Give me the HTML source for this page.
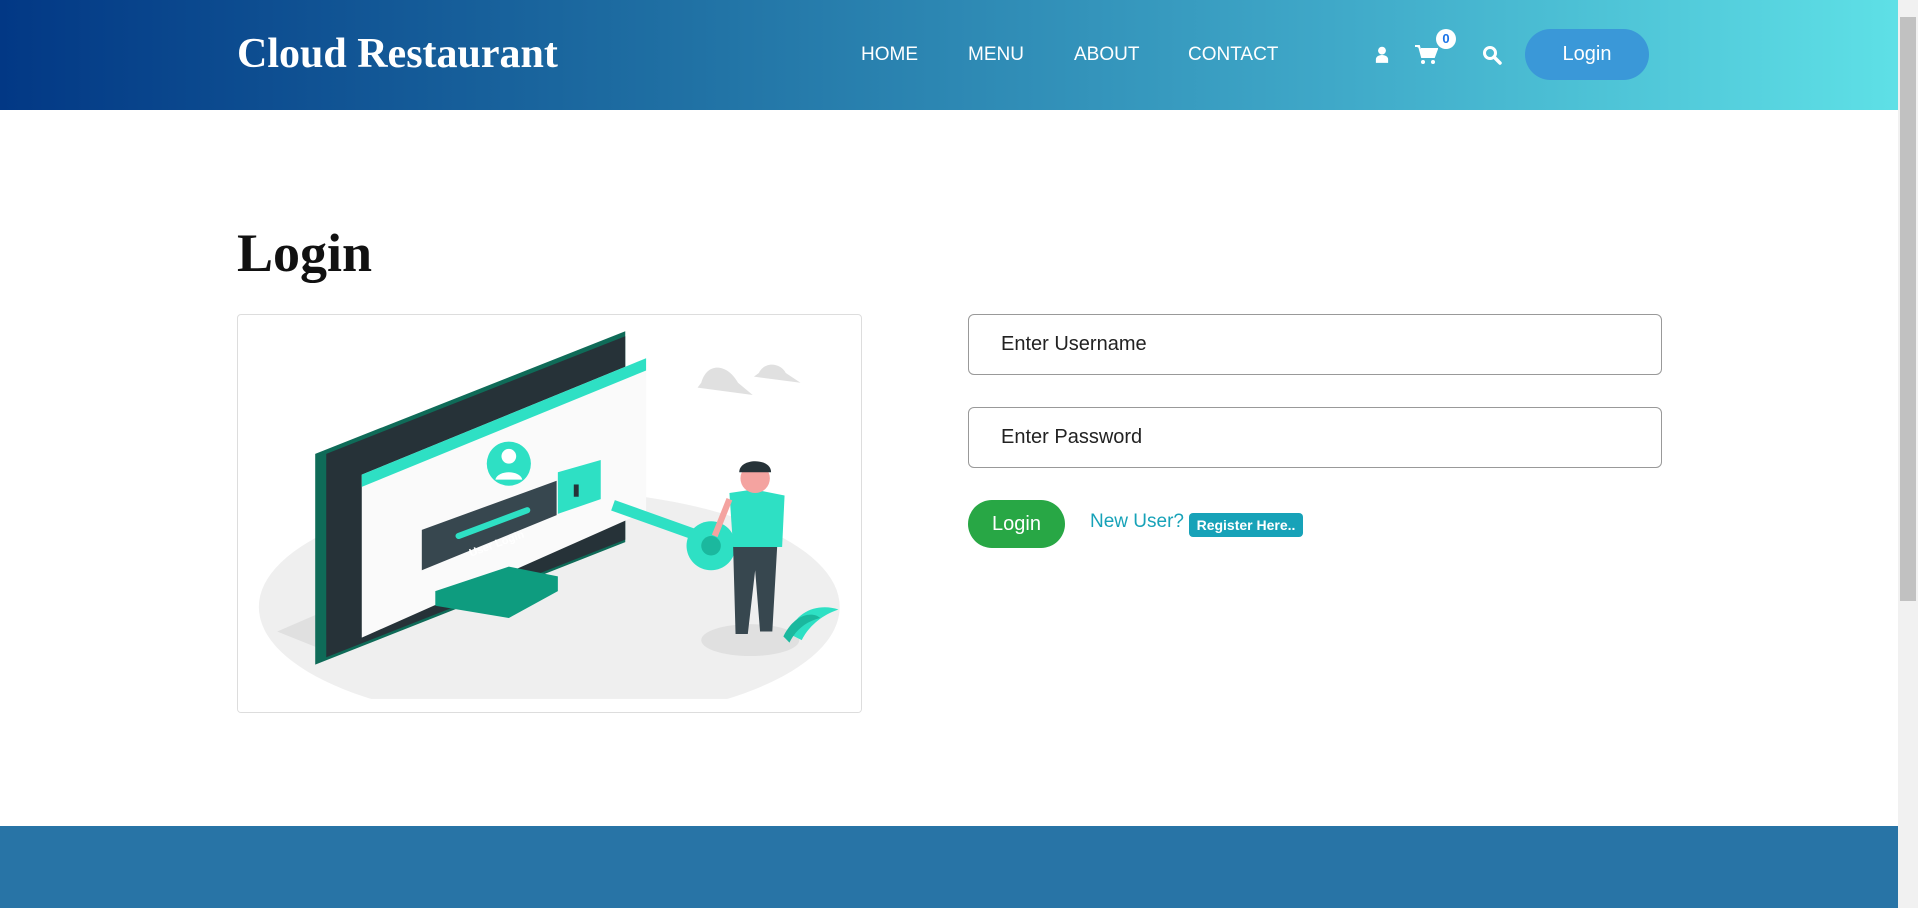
<!DOCTYPE html>
<html><head><meta charset="utf-8"><style>
*{margin:0;padding:0;box-sizing:border-box}
body{width:1918px;height:908px;overflow:hidden;background:#fff;font-family:"Liberation Sans",Roboto,sans-serif;position:relative}
.hdr{position:absolute;left:0;top:0;width:1898px;height:110px;background:linear-gradient(90deg,#023885 0%,#1f6fa3 35%,#3fa8c8 70%,#5ee0e6 100%)}
.logo{position:absolute;left:237px;top:30px;font-family:"Liberation Serif",serif;font-weight:bold;font-size:42px;color:#fff}
.nav{position:absolute;top:44px;font-size:19px;color:#fff}
.btn{position:absolute;left:1525px;top:29px;width:124px;height:51px;border-radius:26px;background:#3a98d8;color:#fff;font-size:20px;text-align:center;line-height:51px}
h1{position:absolute;left:237px;top:222px;font-family:"Liberation Serif",serif;font-weight:bold;font-size:54px;color:#111}
.img{position:absolute;left:237px;top:314px;width:625px;height:399px;border:1px solid #ddd;border-radius:4px;overflow:hidden}
.in{position:absolute;left:968px;width:694px;height:61px;border:1px solid #999;border-radius:6px;font-size:20px;color:#222;padding-left:32px;line-height:59px}
.gl{position:absolute;left:968px;top:500px;width:97px;height:48px;border-radius:24px;background:#28a745;color:#fff;font-size:20px;text-align:center;line-height:48px}
.nu{position:absolute;left:1090px;top:511px;font-size:19px;color:#17a2b8}
.badge{position:absolute;left:1189px;top:513px;width:114px;height:24px;border-radius:4px;background:#17a2b8;color:#fff;font-size:14px;font-weight:bold;text-align:center;line-height:24px}
.foot{position:absolute;left:0;top:826px;width:1898px;height:82px;background:#2874a6}
.sb{position:absolute;left:1898px;top:0;width:20px;height:908px;background:#f1f1f1}
.th{position:absolute;left:1900px;top:17px;width:16px;height:584px;background:#c1c1c1}
</style></head><body>
<div class="hdr">
<div class="logo">Cloud Restaurant</div>
<div class="nav" style="left:861px">HOME</div>
<div class="nav" style="left:968px">MENU</div>
<div class="nav" style="left:1074px">ABOUT</div>
<div class="nav" style="left:1188px">CONTACT</div>
<svg style="position:absolute;left:1375px;top:46px" width="14" height="18" viewBox="0 0 16 20"><circle cx="8" cy="5" r="4.5" fill="#fff"/><path d="M1 19v-4c0-3 3-5 7-5s7 2 7 5v4z" fill="#fff"/></svg>
<svg style="position:absolute;left:1414px;top:44px" width="24" height="22" viewBox="0 0 24 22"><path d="M1 2h4l3 11h12l3-8H7" fill="#fff" stroke="#fff" stroke-width="2"/><circle cx="9" cy="18" r="2" fill="#fff"/><circle cx="19" cy="18" r="2" fill="#fff"/></svg>
<div style="position:absolute;left:1436px;top:29px;width:20px;height:20px;border-radius:10px;background:#fff;color:#1a73e8;font-size:13px;font-weight:bold;text-align:center;line-height:20px">0</div>
<svg style="position:absolute;left:1482px;top:45px" width="20" height="20" viewBox="0 0 20 20"><circle cx="8" cy="8" r="5.5" fill="none" stroke="#fff" stroke-width="3"/><path d="M12 12l6 6" stroke="#fff" stroke-width="3.5" stroke-linecap="round"/></svg>
<div class="btn">Login</div>
</div>
<h1>Login</h1>
<div class="img"><svg width="625" height="399" viewBox="0 0 510 325">
<ellipse cx="254" cy="238" rx="237" ry="95" fill="#efefef"/>
<rect x="0" y="313" width="510" height="20" fill="#fff"/>
<path d="M32 258l45 18 170-70-60-15z" fill="#e0e0e0"/>
<path d="M63 113l253-100v172l-253 100z" fill="#0f6b58"/>
<path d="M72 113l244-96v166l-244 96z" fill="#263238"/>
<path d="M101 130l232-95v125l-232 103z" fill="#fafafa"/>
<path d="M101 130l232-95v10l-232 95z" fill="#2ee0c4"/>
<path d="M161 225l60-20 40 8v12l-40 22-60-10z" fill="#0e9c7f"/>
<path d="M150 175l110-40v28l-110 45z" fill="#37474f"/>
<path d="M180 180l56-21" stroke="#2ee0c4" stroke-width="5" stroke-linecap="round"/>
<text x="190" y="197" transform="rotate(-20 190 197)" fill="#fff" font-size="9" font-weight="bold">User Login</text>
<circle cx="221" cy="121" r="18" fill="#2ee0c4"/>
<circle cx="221" cy="115" r="6" fill="#fff"/>
<path d="M210 134c2-8 20-8 22 0z" fill="#fff"/>
<path d="M261 128l35-10v32l-35 12z" fill="#2ee0c4"/>
<path d="M276 138v10" stroke="#263238" stroke-width="4"/>
<path d="M306 155l70 25" stroke="#2ee0c4" stroke-width="9"/>
<circle cx="386" cy="188" r="20" fill="#2ee0c4"/>
<circle cx="386" cy="188" r="8" fill="#1bb89e"/>
<ellipse cx="418" cy="265" rx="40" ry="13" fill="#e0e0e0"/>
<path d="M404 188h36l-4 70h-10l-4-50-6 52h-10z" fill="#37474f"/>
<path d="M401 145l20-3 25 5-2 42h-40z" fill="#2ee0c4"/>
<path d="M401 150l-12 30" stroke="#f4a3a0" stroke-width="5"/>
<circle cx="422" cy="133" r="12" fill="#f4a3a0"/>
<path d="M409 128c0-12 26-12 26 0z" fill="#263238"/>
<path d="M450 260c5-20 25-25 40-20-15 5-25 15-30 25z" fill="#2ee0c4"/>
<path d="M445 262c10-20 25-20 30-15-12 3-20 10-25 20z" fill="#1bb89e"/>
<path d="M378 55c5-18 22-15 30 0l12 10-45-6z" fill="#e0e0e0"/>
<path d="M425 47c5-10 18-8 22 0l12 8-38-5z" fill="#e0e0e0"/>
</svg></div>
<div class="in" style="top:314px">Enter Username</div>
<div class="in" style="top:407px">Enter Password</div>
<div class="gl">Login</div>
<div class="nu">New User?</div>
<div class="badge">Register Here..</div>
<div class="foot"></div>
<div class="sb"></div><div class="th"></div>
</body></html>
